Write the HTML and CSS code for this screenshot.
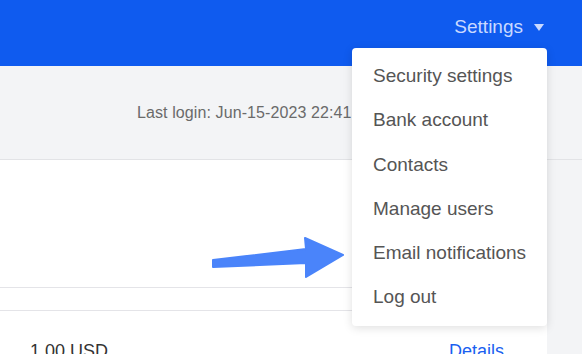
FILE: index.html
```html
<!DOCTYPE html>
<html lang="en">
<head>
  <meta charset="UTF-8" />
  <title>Account</title>
  <link rel="stylesheet" href="styles.css">
</head>
<body>
  <header class="top-bar">
    <div class="settings-toggle">
      <span>Settings</span>
      <span class="caret"></span>
    </div>
    <ul class="settings-menu">
      <li>Security settings</li>
      <li>Bank account</li>
      <li>Contacts</li>
      <li>Manage users</li>
      <li>Email notifications</li>
      <li>Log out</li>
    </ul>
  </header>

  <section class="summary">
    <p class="last-login">Last login: Jun-15-2023 22:41:07</p>
  </section>

  <main class="card">
    <div class="card-body"></div>
    <div class="table-head"></div>
    <div class="table-row">
      <span class="amount">1.00 USD</span>
      <a class="details-link" href="#">Details</a>
    </div>
  </main>

  <svg class="pointer-arrow" width="140" height="44" viewBox="0 0 140 44">
    <polygon points="1,23 94,12 93,1 131,18 94,40 94,26 1,30" fill="#4a84fa" stroke="#4a84fa" stroke-width="2" stroke-linejoin="round" />
  </svg>
</body>
</html>
```

FILE: styles.css
```css
body {
  margin: 0;
  padding: 0;
  font-family: 'Liberation Sans', Arial, sans-serif;
  background: #f3f4f6;
  color: #333;
  height: 354px;
  overflow: hidden;
}

.top-bar {
  position: relative;
  height: 66px;
  background: #0f5bef;
  display: flex;
  justify-content: flex-end;
  align-items: flex-start;
  padding-right: 38px;
}

.settings-toggle {
  display: flex;
  align-items: center;
  gap: 11px;
  margin-top: 16px;
  color: #c9d9ff;
  font-size: 19px;
}

.caret {
  width: 0;
  height: 0;
  border-left: 5px solid transparent;
  border-right: 5px solid transparent;
  border-top: 7px solid #c9d9ff;
  margin-top: 1px;
}

.settings-menu {
  position: absolute;
  top: 48px;
  left: 352px;
  width: 195px;
  margin: 0;
  padding: 6px 0;
  list-style: none;
  background: #fff;
  border-radius: 4px;
  box-shadow: 0 2px 10px rgba(0, 0, 0, 0.13);
  z-index: 2;
}

.settings-menu li {
  height: 44.3px;
  line-height: 44px;
  padding-left: 21px;
  font-size: 19px;
  color: #555;
}

.summary {
  height: 93px;
  border-bottom: 1px solid #e2e3e6;
  display: flex;
  justify-content: flex-end;
  align-items: center;
}

.last-login {
  margin: 0 0 0 137px;
  width: 445px;
  font-size: 16px;
  letter-spacing: 0.1px;
  color: #6a6a6a;
  white-space: nowrap;
  overflow: hidden;
}

.card {
  margin-right: 35px;
  background: #fff;
  height: 200px;
}

.card-body {
  height: 127px;
  border-bottom: 1px solid #e4e4e8;
}

.table-head {
  height: 22px;
  border-bottom: 1px solid #e4e4e8;
}

.table-row {
  display: flex;
  justify-content: space-between;
  padding: 30px 43px 0 30px;
  font-size: 18px;
}

.amount {
  color: #333;
}

.details-link {
  color: #1a5ff0;
  text-decoration: none;
}

.pointer-arrow {
  position: absolute;
  top: 237px;
  left: 212px;
}
```
